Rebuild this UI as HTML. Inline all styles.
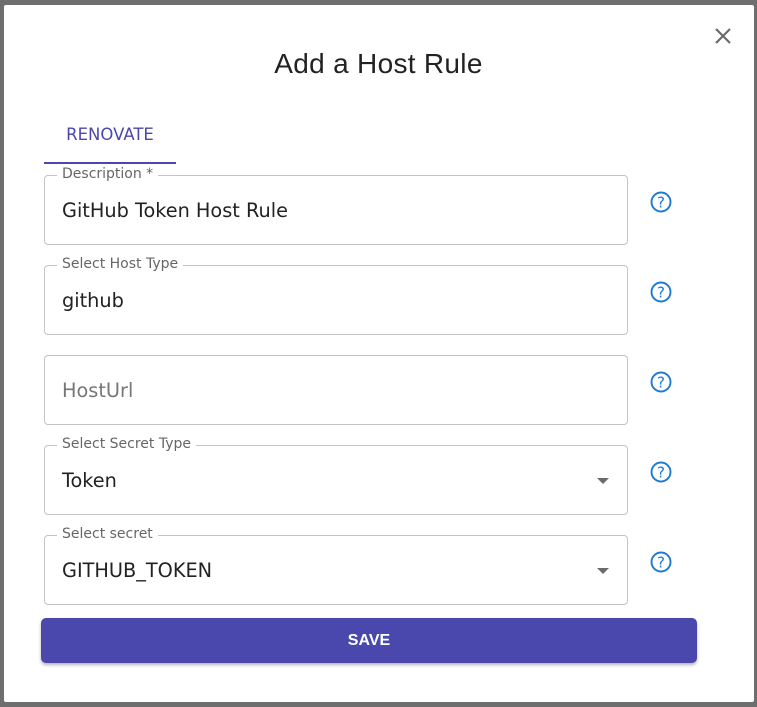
<!DOCTYPE html>
<html><head><style>
body{margin:0;width:757px;height:707px;background:#6e6e6e;position:relative;overflow:hidden;font-family:"DejaVu Sans",sans-serif}
.dlg{position:absolute;left:4px;top:5px;width:750px;height:697px;background:#fff;border-radius:2px}
.title{position:absolute;left:0;width:757px;top:48px;text-align:center;font-size:28px;color:#222;font-family:"Liberation Sans",sans-serif;letter-spacing:0.3px}
.tab{position:absolute;left:44px;top:118px;width:132px;height:46px;border-bottom:2px solid #4a48ad;box-sizing:border-box;text-align:center;color:#4a48ad;font-size:16.5px;line-height:34px}
.f{position:absolute;left:44px;width:584px;height:70px;border:1px solid #c4c4c4;border-radius:4px;box-sizing:border-box}
.lab{position:absolute;left:12px;top:-10px;background:#fff;padding:0 5px;font-size:14px;color:#666}
.val{position:absolute;left:17px;top:23px;font-size:19.3px;color:#222}
.ph{color:#777}
.arr{position:absolute;right:18px;top:32px;width:0;height:0;border-left:6px solid transparent;border-right:6px solid transparent;border-top:6px solid #6b6b6b}
.q{position:absolute;left:650px;width:22px;height:22px}
.btn{position:absolute;left:41px;top:618px;width:656px;height:45px;background:#4a48ad;border-radius:5px;box-shadow:0 2px 3px rgba(0,0,0,.3);color:#fff;font-weight:bold;font-size:16px;text-align:center;line-height:45px;font-family:"Liberation Sans",sans-serif}
</style></head><body>
<div class="dlg"></div>
<svg style="position:absolute;left:713px;top:26px" width="20" height="20"><path d="M3 3L17 17M17 3L3 17" stroke="#6b6b6b" stroke-width="2.2"/></svg>
<div class="title">Add a Host Rule</div>
<div class="tab">RENOVATE</div>
<div class="f" style="top:175px"><span class="lab">Description *</span><span class="val">GitHub Token Host Rule</span></div>
<div class="f" style="top:265px"><span class="lab">Select Host Type</span><span class="val">github</span></div>
<div class="f" style="top:355px"><span class="val ph">HostUrl</span></div>
<div class="f" style="top:445px"><span class="lab">Select Secret Type</span><span class="val">Token</span><span class="arr"></span></div>
<div class="f" style="top:535px"><span class="lab">Select secret</span><span class="val">GITHUB_TOKEN</span><span class="arr"></span></div>
<svg class="q" style="top:191px" viewBox="0 0 22 22"><circle cx="11" cy="11" r="9.5" fill="none" stroke="#1e7ad0" stroke-width="1.9"/><text x="11" y="16.5" text-anchor="middle" font-size="15" fill="#1e7ad0" font-family="DejaVu Sans">?</text></svg>
<svg class="q" style="top:281px" viewBox="0 0 22 22"><circle cx="11" cy="11" r="9.5" fill="none" stroke="#1e7ad0" stroke-width="1.9"/><text x="11" y="16.5" text-anchor="middle" font-size="15" fill="#1e7ad0" font-family="DejaVu Sans">?</text></svg>
<svg class="q" style="top:371px" viewBox="0 0 22 22"><circle cx="11" cy="11" r="9.5" fill="none" stroke="#1e7ad0" stroke-width="1.9"/><text x="11" y="16.5" text-anchor="middle" font-size="15" fill="#1e7ad0" font-family="DejaVu Sans">?</text></svg>
<svg class="q" style="top:461px" viewBox="0 0 22 22"><circle cx="11" cy="11" r="9.5" fill="none" stroke="#1e7ad0" stroke-width="1.9"/><text x="11" y="16.5" text-anchor="middle" font-size="15" fill="#1e7ad0" font-family="DejaVu Sans">?</text></svg>
<svg class="q" style="top:551px" viewBox="0 0 22 22"><circle cx="11" cy="11" r="9.5" fill="none" stroke="#1e7ad0" stroke-width="1.9"/><text x="11" y="16.5" text-anchor="middle" font-size="15" fill="#1e7ad0" font-family="DejaVu Sans">?</text></svg>
<div class="btn">SAVE</div>
</body></html>
